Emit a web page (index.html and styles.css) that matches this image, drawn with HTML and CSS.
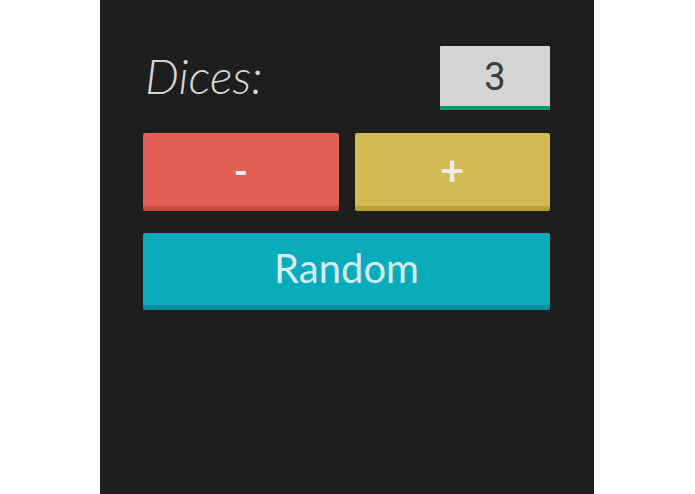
FILE: index.html
```html
<!DOCTYPE html>
<html>
<head>
<meta charset="utf-8">
<link rel="stylesheet" href="styles.css">
</head>
<body>
<div class="panel">
  <div class="row top">
    <span class="label">Dices:</span>
    <div class="count">3</div>
  </div>
  <div class="row btns">
    <button class="btn minus">-</button>
    <button class="btn plus">+</button>
  </div>
  <button class="btn random">Random</button>
</div>
</body>
</html>
```

FILE: styles.css
```css
html, body {
  margin: 0;
  padding: 0;
  background: #ffffff;
  height: 100%;
}
.panel {
  width: 494px;
  height: 494px;
  margin: 0 0 0 100px;
  background: #1e1e1e;
  box-sizing: border-box;
  padding: 46px 44px 0 43px;
  display: flex;
  flex-direction: column;
}
.row {
  display: flex;
}
.top {
  justify-content: space-between;
  align-items: center;
  height: 64px;
}
.label {
  font-family: Lato, sans-serif;
  font-weight: 300;
  font-style: italic;
  font-size: 48px;
  color: #d6d6d6;
  padding-left: 2px;
  margin-top: -5px;
}
.count {
  width: 110px;
  height: 64px;
  box-sizing: border-box;
  background: #d4d4d4;
  border-bottom: 4px solid #13956b;
  border-radius: 1px;
  font-family: Roboto, sans-serif;
  font-weight: 400;
  font-size: 38px;
  color: #3c3c3c;
  display: flex;
  align-items: center;
  justify-content: center;
  padding-top: 2px;
}
.btns {
  margin-top: 23px;
  gap: 16px;
}
.btn {
  border: none;
  margin: 0;
  padding: 0;
  height: 78px;
  box-sizing: border-box;
  border-radius: 2px;
  font-family: Lato, sans-serif;
  color: #ececec;
  display: flex;
  align-items: center;
  justify-content: center;
}
.minus, .plus {
  flex: 1;
  font-size: 38px;
  font-weight: 700;
  border-bottom: 5px solid;
}
.minus {
  background: #e06055;
  border-bottom-color: #c7483f;
}
.plus {
  background: #d2bb52;
  border-bottom-color: #b9a03b;
  font-size: 42px;
}
.random {
  margin-top: 22px;
  height: 77px;
  width: 100%;
  background: #0aacbb;
  border-bottom: 5px solid #08909d;
  font-size: 40px;
  font-weight: 400;
  color: #d4ecee;
  padding-bottom: 2px;
}
```
